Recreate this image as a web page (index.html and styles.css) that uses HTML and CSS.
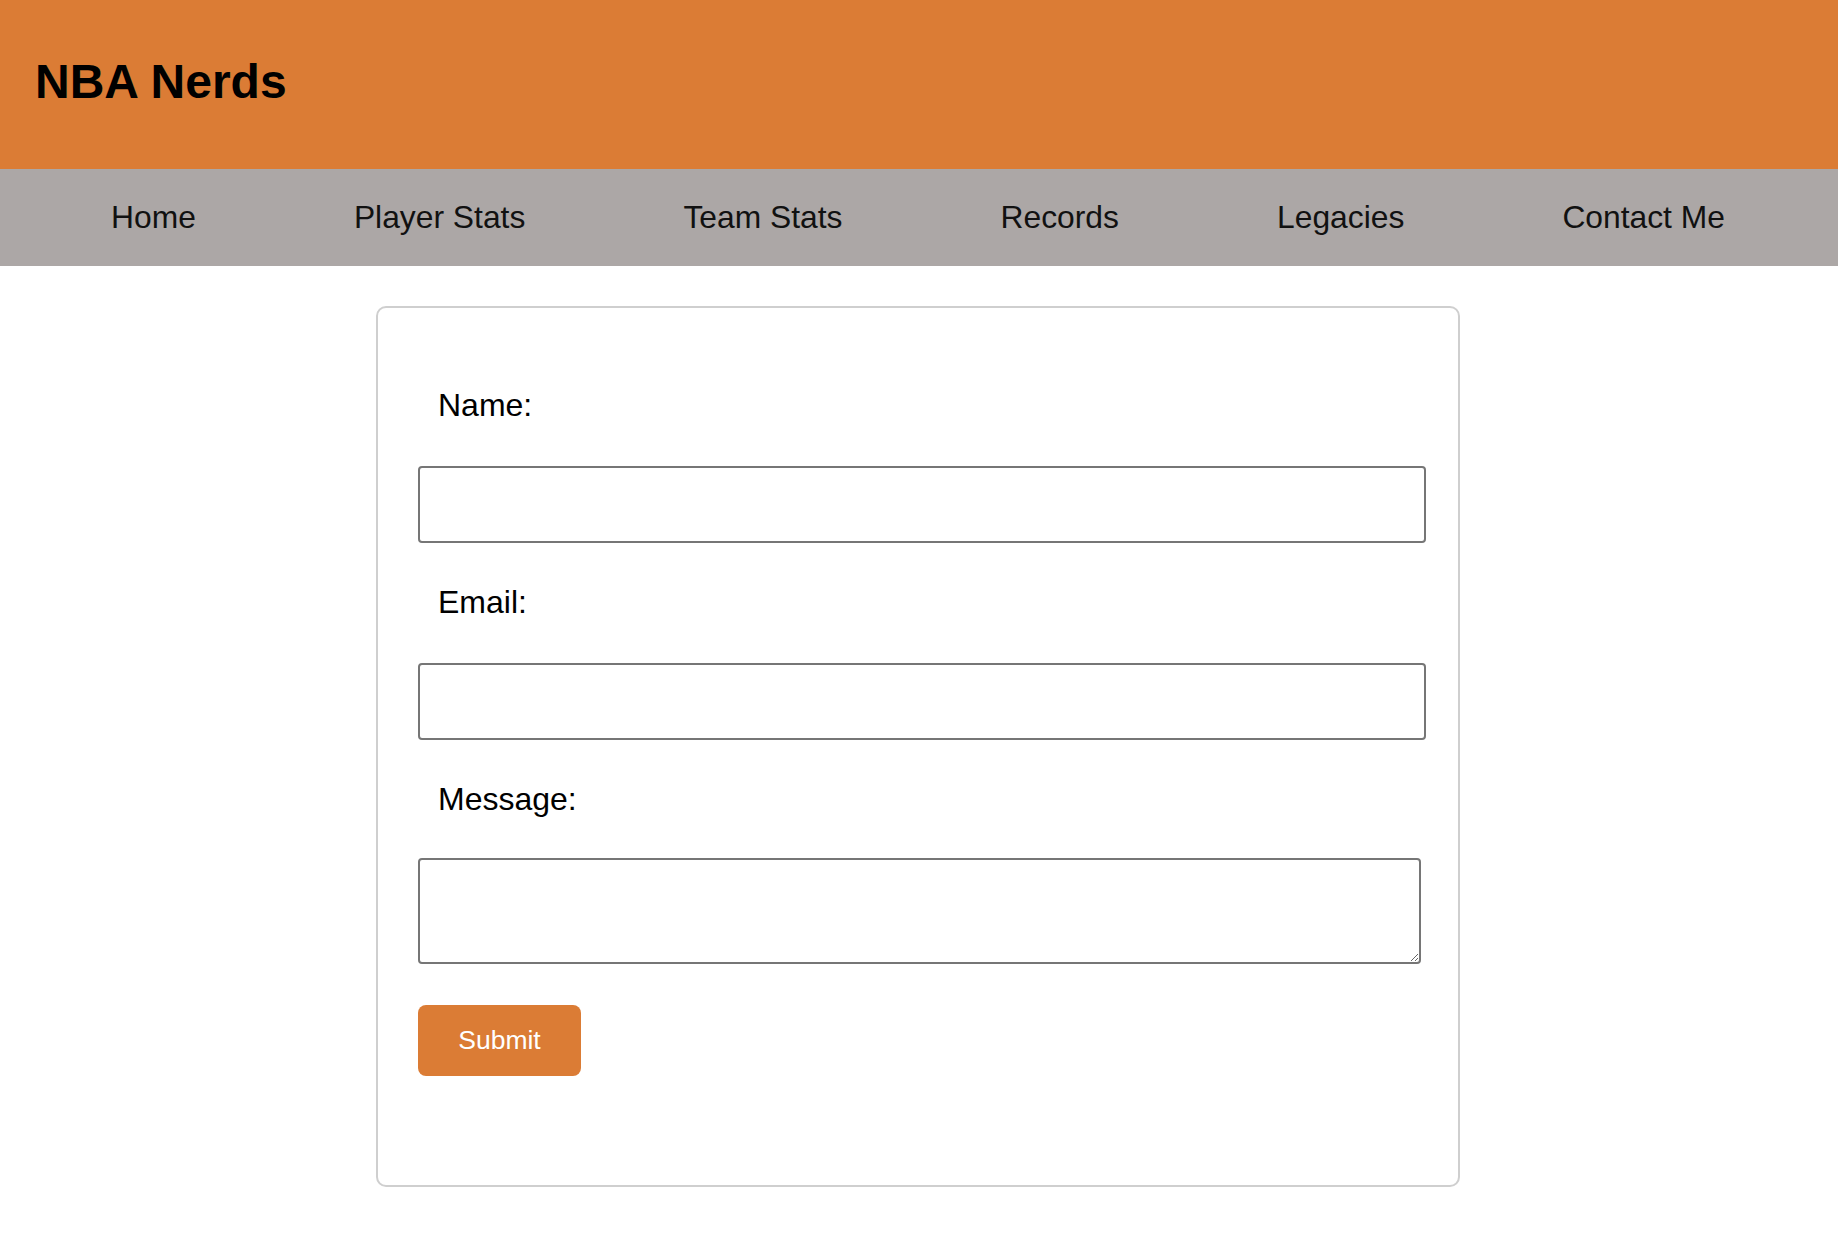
FILE: index.html
```html
<!DOCTYPE html>
<html lang="en">
<head>
<meta charset="utf-8">
<title>NBA Nerds - Contact Me</title>
<link rel="stylesheet" href="styles.css">
</head>
<body>
<header class="site-header">
  <h1 class="site-title">NBA Nerds</h1>
</header>
<nav class="site-nav">
  <a href="#" class="nav-link">Home</a>
  <a href="#" class="nav-link">Player Stats</a>
  <a href="#" class="nav-link">Team Stats</a>
  <a href="#" class="nav-link">Records</a>
  <a href="#" class="nav-link">Legacies</a>
  <a href="#" class="nav-link">Contact Me</a>
</nav>
<main class="main">
  <form class="contact-card">
    <label class="field-label" for="name">Name:</label>
    <input class="field-input" type="text" id="name">
    <label class="field-label" for="email">Email:</label>
    <input class="field-input" type="email" id="email">
    <label class="field-label field-label-msg" for="message">Message:</label>
    <textarea class="field-textarea" id="message"></textarea>
    <button class="submit-btn" type="button">Submit</button>
  </form>
</main>
</body>
</html>
```
FILE: styles.css
```css
html, body {
  margin: 0;
  padding: 0;
  background: #ffffff;
  font-family: "Liberation Sans", Arial, Helvetica, sans-serif;
  color: #000;
}

.site-header {
  background: #db7c35;
  padding: 54px 35px 60px;
}

.site-title {
  margin: 0;
  font-size: 48px;
  font-weight: 700;
  line-height: 55px;
  color: #000;
}

.site-nav {
  background: #aca7a6;
  height: 97px;
  display: flex;
  align-items: center;
  justify-content: space-between;
  padding: 0 113px 0 111px;
}

.nav-link {
  font-size: 31.8px;
  line-height: 37px;
  color: #111;
  text-decoration: none;
}

.main {
  padding-top: 40px;
  padding-bottom: 57px;
}

.contact-card {
  box-sizing: border-box;
  width: 1084px;
  margin: 0 auto;
  border: 2px solid #cfcfcf;
  border-radius: 10px;
  padding: 79px 40px 109px 40px;
  display: flex;
  flex-direction: column;
  align-items: flex-start;
  position: relative;
  left: -1px;
}

.field-label {
  display: block;
  font-size: 32px;
  line-height: 37px;
  padding-left: 20px;
  margin-bottom: 42px;
}

.field-label-msg {
  margin-bottom: 40px;
}

.field-input {
  display: block;
  box-sizing: border-box;
  width: 1008px;
  height: 77px;
  margin: 0 0 41px;
  border: 2px solid #767676;
  border-radius: 4px;
  background: #fff;
  font-size: 26px;
  padding: 2px 6px;
}

.field-textarea {
  display: block;
  box-sizing: border-box;
  width: 1003px;
  height: 106px;
  margin: 0 0 41px;
  border: 2px solid #767676;
  border-radius: 4px;
  background: #fff;
  font-size: 26px;
  padding: 4px;
  resize: both;
}

.submit-btn {
  box-sizing: border-box;
  width: 163px;
  height: 71px;
  border: none;
  border-radius: 8px;
  background: #db7c35;
  color: #fff;
  font-family: "Liberation Sans", Arial, Helvetica, sans-serif;
  font-size: 26.5px;
  padding: 0;
  cursor: pointer;
}
```
